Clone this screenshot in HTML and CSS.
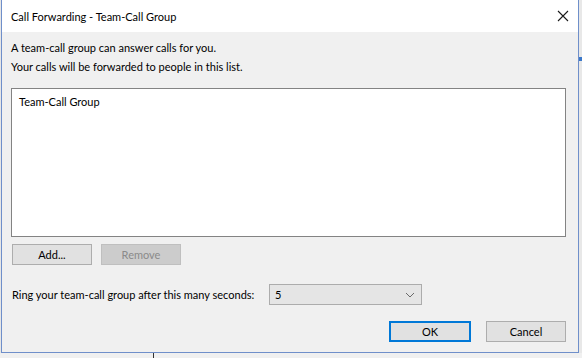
FILE: index.html
```html
<!DOCTYPE html>
<html>
<head>
<meta charset="utf-8">
<link rel="stylesheet" href="styles.css">
</head>
<body>
<div class="screen">
  <div class="window">
    <div class="titlebar">
      <span class="title">Call Forwarding - Team-Call Group</span>
      <svg class="close" width="12" height="12" viewBox="0 0 12 12"><path d="M1 1 L11 11 M11 1 L1 11" stroke="#1a1a1a" stroke-width="1.1" fill="none"/></svg>
    </div>
    <div class="content">
      <p class="intro">A team-call group can answer calls for you.<br>Your calls will be forwarded to people in this list.</p>
      <div class="listbox">
        <div class="item">Team-Call Group</div>
      </div>
      <div class="btnrow">
        <button class="btn">Add...</button>
        <button class="btn disabled">Remove</button>
      </div>
      <div class="ringrow">
        <span class="label">Ring your team-call group after this many seconds:</span>
        <div class="combo">
          <span>5</span>
          <svg width="10" height="6" viewBox="0 0 10 6"><path d="M1 1 L5 5 L9 1" stroke="#6a6a6a" stroke-width="1" fill="none"/></svg>
        </div>
      </div>
      <div class="actions">
        <button class="btn default">OK</button>
        <button class="btn">Cancel</button>
      </div>
    </div>
  </div>
  <div class="side"><div class="sidemark"></div></div>
</div>
<div class="under">
  <div class="under-left"></div>
  <div class="under-right"></div>
</div>
</body>
</html>
```

FILE: styles.css
```css
* { box-sizing: border-box; }
html, body { margin: 0; padding: 0; }
body {
  width: 582px;
  height: 358px;
  overflow: hidden;
  background: #e6e6e6;
  font-family: Lato, "Noto Sans", sans-serif;
  font-size: 11px;
  color: #000;
}
.screen {
  display: flex;
  height: 353px;
  padding-left: 1px;
}
.window {
  width: 578px;
  height: 353px;
  border: 1px solid #6f8fca;
  border-top: none;
  background: #f0f0f0;
  display: flex;
  flex-direction: column;
}
.side {
  flex: 1;
  background: #e8e8e8;
  padding-top: 57px;
}
.sidemark {
  height: 4px;
  background: #3b78c9;
}
.titlebar {
  height: 32px;
  background: #fff;
  display: flex;
  align-items: center;
  justify-content: space-between;
  padding: 2px 8px 0 9px;
}
.title { line-height: 16px; }
.close { margin-right: 1px; margin-bottom: 2px; }
.content {
  flex: 1;
  padding: 6px 12px 0 9px;
  display: flex;
  flex-direction: column;
}
.intro {
  margin: 0;
  line-height: 19px;
}
.listbox {
  margin-top: 12px;
  height: 149px;
  background: #fff;
  border: 1px solid #838383;
  padding: 3px 7px;
}
.item { line-height: 19px; }
.btnrow {
  margin-top: 7px;
  display: flex;
  gap: 9px;
  padding-left: 1px;
}
.btn {
  width: 80px;
  height: 21px;
  font: inherit;
  color: #000;
  background: #e1e1e1;
  border: 1px solid #adadad;
  padding: 0;
  line-height: 17px;
}
.btn.disabled {
  background: #cccccc;
  border-color: #bfbfbf;
  color: #8a8a8a;
}
.ringrow {
  margin-top: 19px;
  display: flex;
  align-items: center;
}
.label {
  line-height: 19px;
  flex: 0 0 258px;
  white-space: nowrap;
  padding-left: 1px;
}
.combo {
  width: 153px;
  height: 21px;
  background: #e5e5e5;
  border: 1px solid #acacac;
  display: flex;
  align-items: center;
  justify-content: space-between;
  padding: 0 6px 0 5px;
}
.actions {
  margin-top: 16px;
  display: flex;
  justify-content: flex-end;
  gap: 15px;
}
.btn.default {
  width: 82px;
  border: 2px solid #0078d7;
}
.under {
  display: flex;
  height: 5px;
}
.under-left {
  width: 154px;
  background: #f0f0f0;
  border-right: 1px solid #333;
}
.under-right {
  flex: 1;
  background: #f0f0f0;
}
```
